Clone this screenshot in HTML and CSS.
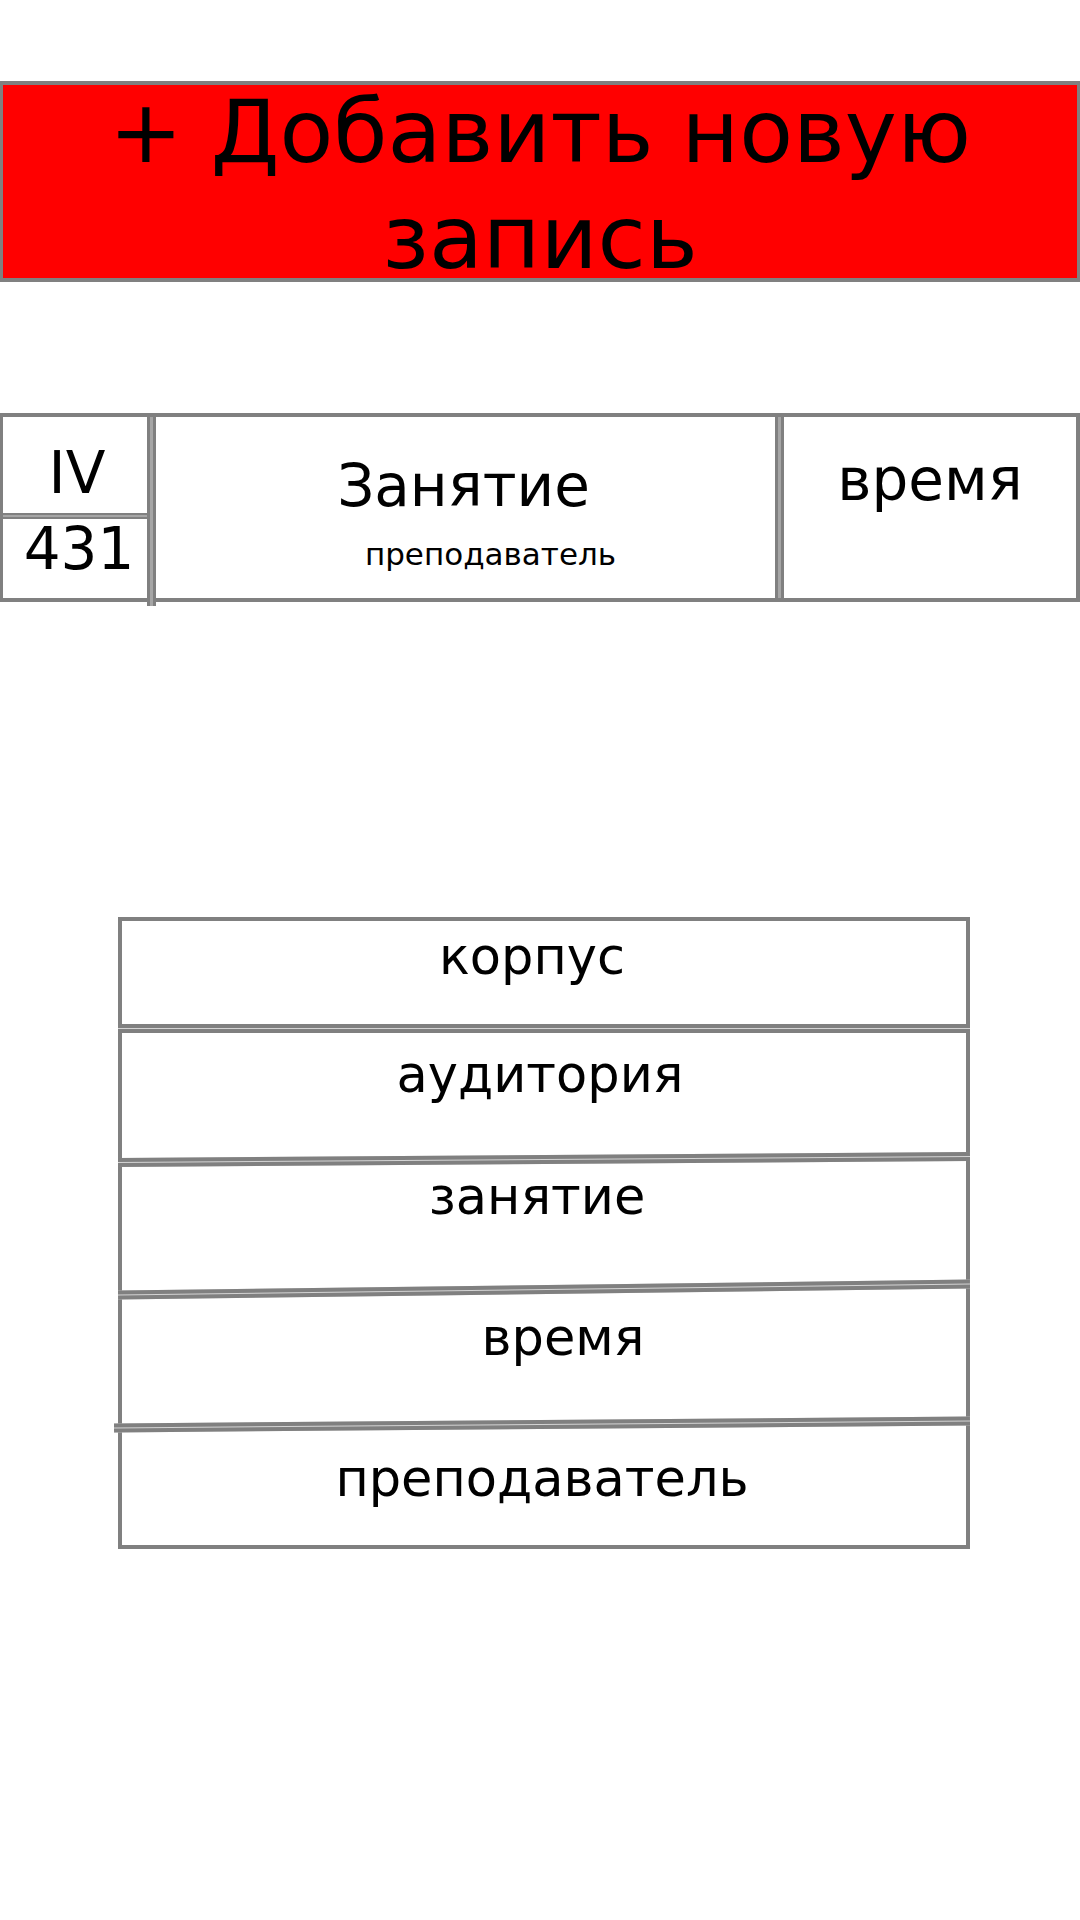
FILE: index.html
```html
<!DOCTYPE html>
<html lang="ru">
<head>
<meta charset="utf-8">
<title>Расписание</title>
<link rel="stylesheet" href="styles.css">
</head>
<body>
  <div class="add-btn"><span class="add-text">+ Добавить новую запись</span></div>

  <div class="lesson-row">
    <div class="col-place">
      <div class="cell-building">IV</div>
      <div class="dbl-h"></div>
      <div class="cell-room">431</div>
    </div>
    <div class="dbl-v dbl-v-long"></div>
    <div class="col-lesson">
      <div class="lesson-title">Занятие</div>
      <div class="lesson-teacher">преподаватель</div>
    </div>
    <div class="dbl-v"></div>
    <div class="col-time">время</div>
  </div>

  <div class="form-box">
    <div class="field field-1"><span class="shift-l">корпус</span></div>
    <div class="sep"></div>
    <div class="field field-2">аудитория</div>
    <div class="sep sep-2"></div>
    <div class="field field-3">занятие</div>
    <div class="sep sep-3"></div>
    <div class="field field-4"><span class="shift-r">время</span></div>
    <div class="sep sep-4"></div>
    <div class="field field-5">преподаватель</div>
  </div>
</body>
</html>
```
FILE: styles.css
```css
html, body {
  margin: 0;
  padding: 0;
  background: #ffffff;
}
body {
  font-family: "DejaVu Sans", sans-serif;
  color: #000;
  width: 1080px;
  height: 1920px;
  overflow: hidden;
}

/* ---------- red add button ---------- */
.add-btn {
  box-sizing: border-box;
  margin-top: 81px;
  height: 201px;
  background: #ff0000;
  border: 4px solid #808080;
  border-left-width: 3px;
  border-right-width: 3px;
  display: flex;
  align-items: center;
  justify-content: center;
  padding-top: 6px;
  text-align: center;
  font-size: 88px;
  line-height: 106px;
}
.add-text {
  display: block;
  width: 900px;
}

/* ---------- lesson row ---------- */
.lesson-row {
  box-sizing: border-box;
  margin-top: 131px;
  height: 189px;
  border: 4px solid #808080;
  border-left-width: 3px;
  display: grid;
  grid-template-columns: 144px 9px 619px 9px 1fr;
  font-size: 58px;
}
.col-place {
  display: flex;
  flex-direction: column;
}
.cell-building {
  height: 96px;
  box-sizing: border-box;
  padding-top: 29px;
  padding-left: 4px;
  line-height: 54px;
  text-align: center;
}
.cell-room {
  height: 76px;
  padding-top: 3px;
  line-height: 54px;
  padding-left: 8px;
  text-align: center;
}
.dbl-h {
  height: 2px;
  border-top: 2px solid #808080;
  border-bottom: 2px solid #808080;
  background: #a6a6a6;
  margin-right: -5px;
}
.dbl-v {
  width: 3px;
  border-left: 3px solid #808080;
  border-right: 3px solid #808080;
  background: #a6a6a6;
}
.dbl-v-long {
  margin-bottom: -8px;
  position: relative;
}
.col-lesson {
  text-align: center;
  padding-top: 35px;
}
.lesson-title {
  line-height: normal;
  padding-right: 4px;
}
.lesson-teacher {
  font-size: 31px;
  line-height: normal;
  margin-top: 16px;
  padding-left: 50px;
}
.col-time {
  text-align: center;
  padding-top: 29px;
  line-height: normal;
}

/* ---------- form box ---------- */
.form-box {
  box-sizing: border-box;
  margin: 315px 0 0 118px;
  width: 852px;
  height: 632px;
  border: 4px solid #808080;
  display: flex;
  flex-direction: column;
  font-size: 51px;
  line-height: normal;
  text-align: center;
}
.field {
  box-sizing: border-box;
}
.field-1 { height: 103px; padding-top: 6px; }
.field-2 { height: 122px; padding-top: 12px; padding-right: 8px; }
.field-3 { height: 121px; padding-top: 3px; padding-right: 14px; }
.field-4 { height: 126px; padding-top: 14px; }
.field-5 { height: 116px; padding-top: 20px; padding-right: 4px; }
.shift-l { display: inline-block; margin-right: 24px; }
.shift-r { display: inline-block; margin-left: 38px; }

.sep {
  height: 1px;
  flex: none;
  border-top: 4px solid #808080;
  border-bottom: 4px solid #808080;
  background: #d4d4d4;
  margin: 0 -4px 0 -4px;
}
.sep-2 { transform: rotate(-0.4deg); }
.sep-3 { transform: rotate(-0.74deg); }
.sep-4 { transform: rotate(-0.47deg); margin-left: -8px; }
```
